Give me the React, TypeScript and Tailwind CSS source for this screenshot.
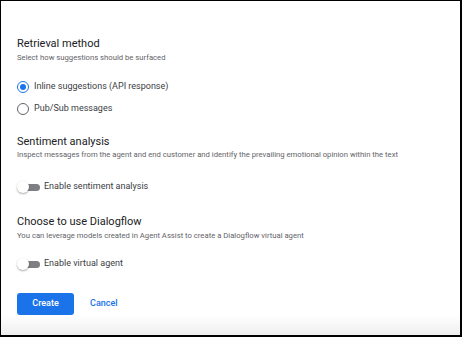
import React from 'react';

const Toggle = ({ label }: { label: string }) => (
  <div className="flex h-[16px] items-center">
    <div className="relative h-[16px] w-[24px]">
      <div className="absolute top-[5px] left-[4px] h-[7px] w-[19px] rounded-full bg-[#7d7f82]" />
      <div className="absolute top-[2px] left-[0px] h-[12px] w-[12px] rounded-full bg-white shadow-[0_1px_2px_rgba(0,0,0,0.35)]" />
    </div>
    <span className="ml-[3px] text-[9px] text-[#3c4043]">{label}</span>
  </div>
);

const Radio = ({ label, checked }: { label: string; checked?: boolean }) => (
  <div className="flex h-[16px] items-center">
    <div
      className={`flex h-[12px] w-[12px] items-center justify-center rounded-full border-[1.5px] ${
        checked ? 'border-[#1a73e8]' : 'border-[#5f6368]'
      }`}
    >
      {checked && <div className="h-[6px] w-[6px] rounded-full bg-[#1a73e8]" />}
    </div>
    <span className="ml-[5px] text-[9px] text-[#3c4043]">{label}</span>
  </div>
);

export default function App() {
  return (
    <div
      className="h-[337px] w-[462px] border-t border-r-2 border-b-2 border-l border-black bg-linear-to-b from-white from-[94%] to-[#efefef]"
      style={{ fontFamily: 'Roboto, "Liberation Sans", sans-serif' }}
    >
      <div className="flex flex-col pt-[36px] pl-[16px]">
        {/* Retrieval method */}
        <h2 className="text-[11px] leading-[14px] text-[#202124]">Retrieval method</h2>
        <p className="mt-[2px] text-[7.7px] leading-[10px] text-[#5f6368]">
          Select how suggestions should be surfaced
        </p>
        <div className="mt-[16px] flex flex-col gap-[6px]">
          <Radio label="Inline suggestions (API response)" checked />
          <Radio label="Pub/Sub messages" />
        </div>

        {/* Sentiment analysis */}
        <h2 className="mt-[18px] text-[11px] leading-[14px] text-[#202124]">Sentiment analysis</h2>
        <p className="mt-[1px] text-[7.7px] leading-[10px] text-[#5f6368]">
          Inspect messages from the agent and end customer and identify the prevailing emotional opinion within the text
        </p>
        <div className="mt-[19px]">
          <Toggle label="Enable sentiment analysis" />
        </div>

        {/* Dialogflow */}
        <h2 className="mt-[20px] text-[11px] leading-[14px] text-[#202124]">Choose to use Dialogflow</h2>
        <p className="mt-[2px] text-[7.7px] leading-[10px] text-[#5f6368]">
          You can leverage models created in Agent Assist to create a Dialogflow virtual agent
        </p>
        <div className="mt-[15px]">
          <Toggle label="Enable virtual agent" />
        </div>

        <div className="mt-[21px] flex items-center">
          <button className="h-[22px] w-[57px] rounded-[3px] bg-[#1a73e8] text-[9px] font-medium text-white">
            Create
          </button>
          <button className="ml-[16px] text-[9px] font-medium text-[#1a73e8]">Cancel</button>
        </div>
      </div>
    </div>
  );
}
